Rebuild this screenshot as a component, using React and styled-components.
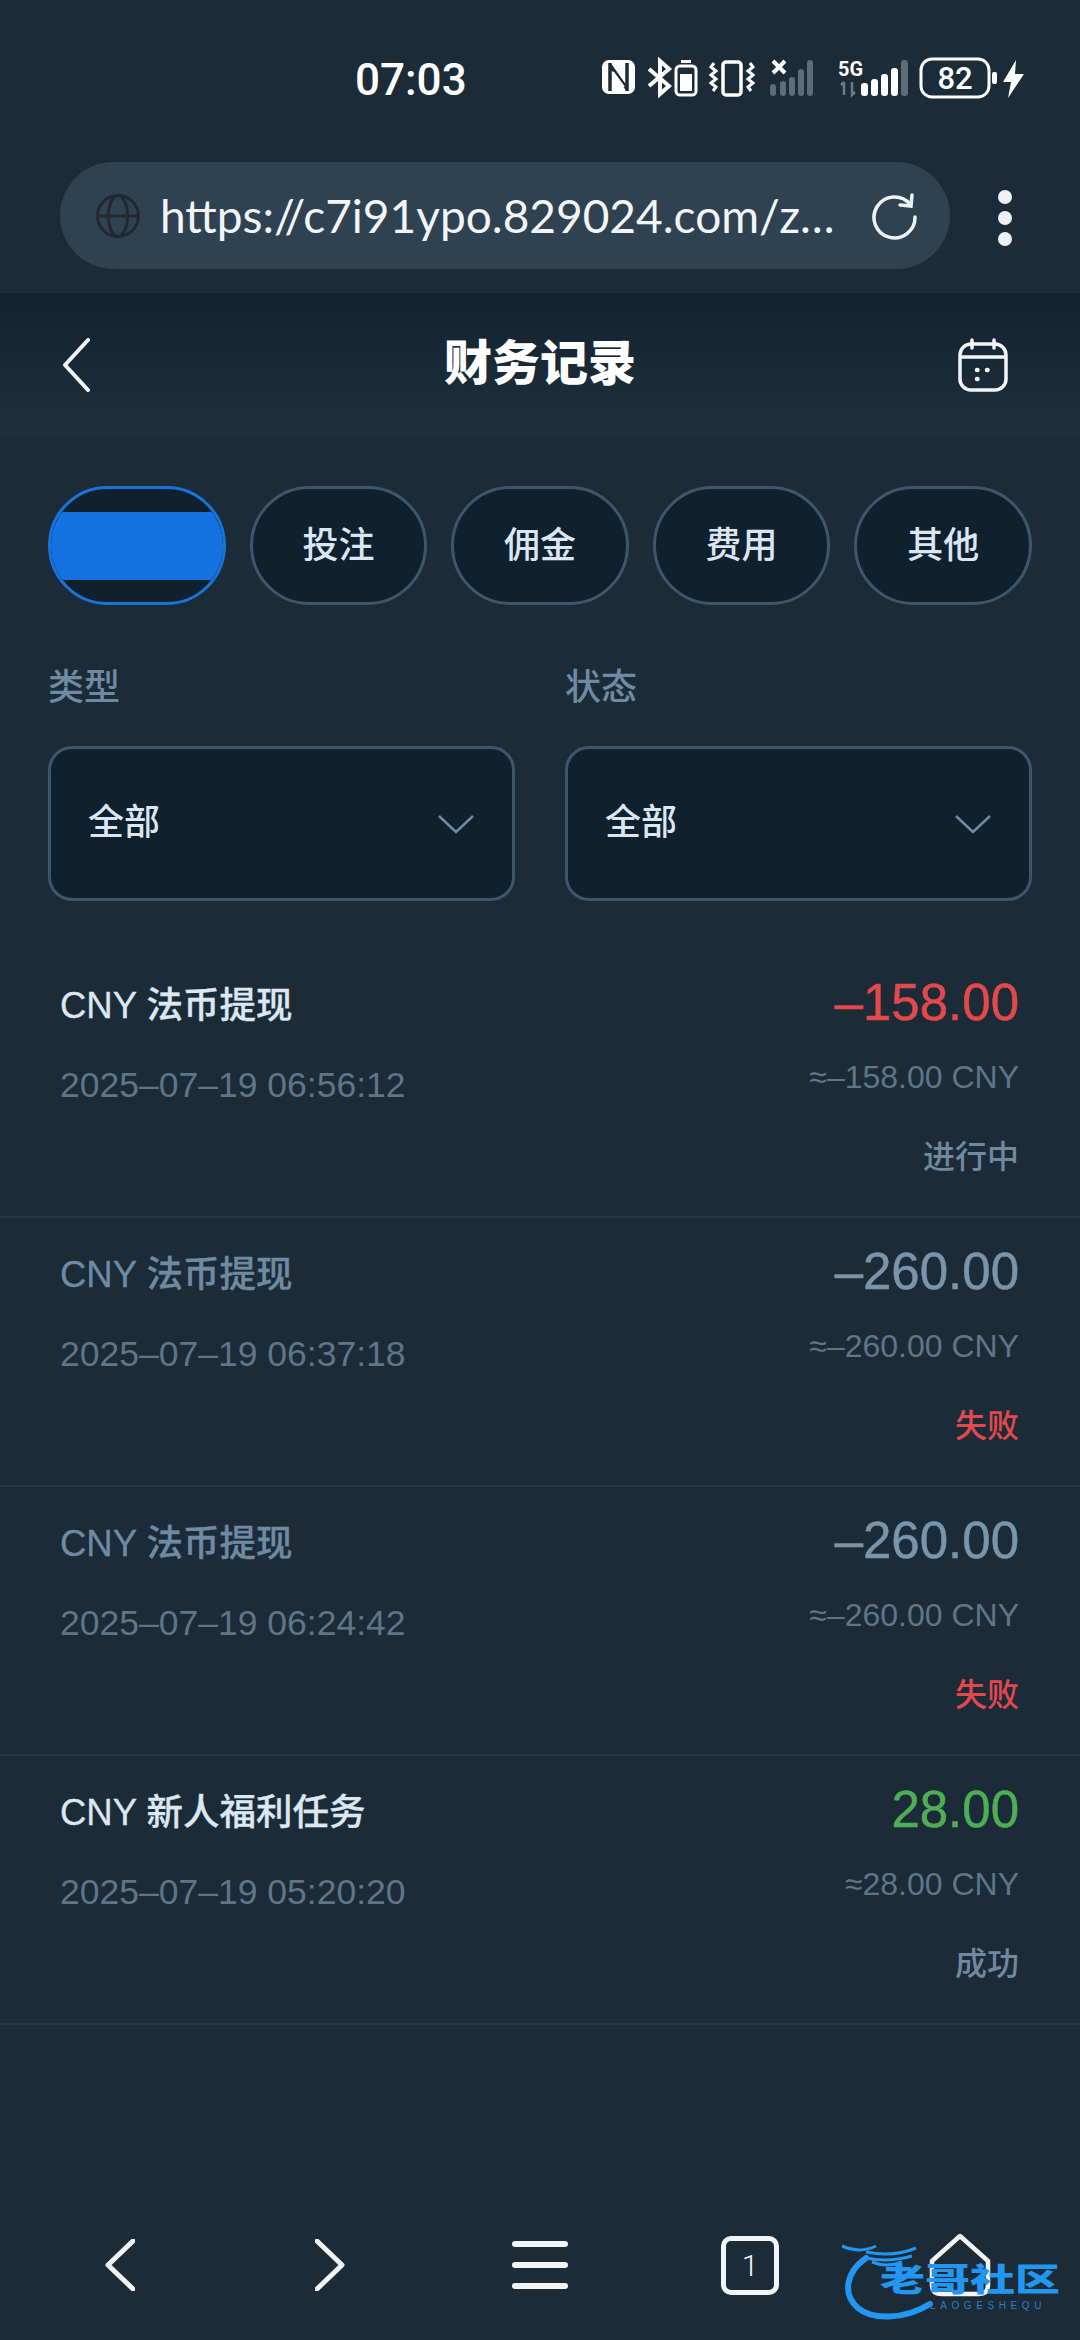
import React from "react";
import styled, { createGlobalStyle } from "styled-components";

const GlobalStyle = createGlobalStyle`
  html, body {
    margin: 0;
    padding: 0;
    background: #1b2b38;
  }
  body {
    font-family: "Liberation Sans", "Noto Sans CJK SC", sans-serif;
  }
`;

const records = [
  { title: "CNY 法币提现", date: "2025–07–19 06:56:12", amount: "–158.00", approx: "≈–158.00 CNY", status: "进行中", tone: "red", active: true },
  { title: "CNY 法币提现", date: "2025–07–19 06:37:18", amount: "–260.00", approx: "≈–260.00 CNY", status: "失败", tone: "dim", failed: true },
  { title: "CNY 法币提现", date: "2025–07–19 06:24:42", amount: "–260.00", approx: "≈–260.00 CNY", status: "失败", tone: "dim", failed: true },
  { title: "CNY 新人福利任务", date: "2025–07–19 05:20:20", amount: "28.00", approx: "≈28.00 CNY", status: "成功", tone: "green", active: true },
];

const amountColors = { red: "#e2494c", dim: "#7a94aa", green: "#4fae55" };

function StatusIcons() {
  return (
    <svg width="430" height="42" viewBox="0 0 430 42" fill="none">
      {/* nfc */}
      <rect x="4" y="3" width="33" height="34" rx="7" fill="#fff" />
      <path d="M12 6v28M29 6v28M12 8l17 24" stroke="#1b2b38" strokeWidth="3.5" />
      <path d="M15 15l11 15" stroke="#fff" strokeWidth="2" />
      {/* bluetooth */}
      <path d="M51 12l20 17-9 8V4l9 8-20 17" stroke="#fff" strokeWidth="4" />
      {/* small battery */}
      <rect x="78" y="9" width="20" height="29" rx="4" stroke="#fff" strokeWidth="3" />
      <rect x="82" y="17" width="12" height="17" fill="#fff" />
      <rect x="83" y="3" width="10" height="3" fill="#fff" />
      {/* vibrate */}
      <rect x="125" y="5" width="18" height="33" rx="3" stroke="#fff" strokeWidth="3.5" />
      <path d="M116 6l-3 4 5 4-5 4 5 4-5 4 5 4-3 4M152 6l3 4-5 4 5 4-5 4 5 4-5 4 3 4" stroke="#fff" strokeWidth="3" />
      {/* no sim signal */}
      <path d="M175 4l12 12M187 4l-12 12" stroke="#fff" strokeWidth="4" />
      <g fill="#5c6c79">
        <rect x="172" y="27" width="6" height="12" rx="3" />
        <rect x="182" y="24" width="6" height="15" rx="3" />
        <rect x="191" y="20" width="6" height="19" rx="3" />
        <rect x="200" y="12" width="6" height="27" rx="3" />
        <rect x="209" y="3" width="6" height="36" rx="3" />
      </g>
      {/* 5g signal */}
      <text x="240" y="19" fill="#fff" fontFamily="Roboto, sans-serif" fontWeight="700" fontSize="21" textLength="25" lengthAdjust="spacingAndGlyphs">5G</text>
      <path d="M246 25v13M243 28l3-3M254 25v13l3-3" stroke="#6c7a86" strokeWidth="2.5" />
      <g fill="#fff">
        <rect x="263" y="26" width="7" height="13" rx="3" />
        <rect x="273" y="22" width="7" height="17" rx="3" />
        <rect x="283" y="17" width="7" height="22" rx="3" />
        <rect x="293" y="11" width="7" height="28" rx="3" />
      </g>
      <rect x="303" y="3" width="7" height="36" rx="3" fill="#5c6c79" />
      {/* battery */}
      <rect x="323" y="2" width="68" height="38" rx="11" stroke="#fff" strokeWidth="3" />
      <text x="357" y="32" textAnchor="middle" fill="#fff" fontFamily="Roboto, sans-serif" fontWeight="500" fontSize="31">82</text>
      <rect x="394" y="15" width="5" height="12" rx="2" fill="#fff" />
      <path d="M418 3l-13 22h8l-3 16 16-24h-9z" fill="#fff" />
    </svg>
  );
}

function Globe() {
  return (
    <svg width="46" height="46" viewBox="0 0 46 46" fill="none" stroke="#23282e" strokeWidth="3">
      <circle cx="23" cy="23" r="20.5" />
      <ellipse cx="23" cy="23" rx="9.5" ry="20.5" />
      <path d="M3 23h40" />
    </svg>
  );
}

function Refresh() {
  return (
    <svg width="48" height="48" viewBox="0 0 48 48" fill="none" stroke="#eef2f5" strokeWidth="3.5" strokeLinecap="round">
      <path d="M39 12A20.5 20.5 0 1 0 44 25" />
      <path d="M41 3l-1 11-11-1" />
    </svg>
  );
}

function Calendar() {
  return (
    <svg width="50" height="54" viewBox="0 0 50 54" fill="none" stroke="#f2f5f7" strokeWidth="3.5" strokeLinecap="round">
      <rect x="2" y="6" width="46" height="46" rx="11" />
      <path d="M14 2v8M36 2v8M3 19h44" />
      <path d="M19 32h.5M19 41h.5M29 32h.5" strokeWidth="4.5" />
    </svg>
  );
}

function Chevron({ dir = "left", w = 28, h = 54, sw = 4 }) {
  const d = dir === "left" ? `M${w - 2} 2L3 ${h / 2}L${w - 2} ${h - 2}` : `M2 2L${w - 3} ${h / 2}L2 ${h - 2}`;
  return (
    <svg width={w} height={h} viewBox={`0 0 ${w} ${h}`} fill="none" stroke="#f2f5f7" strokeWidth={sw} strokeLinecap="round" strokeLinejoin="round">
      <path d={d} />
    </svg>
  );
}

function SelectArrow() {
  return (
    <svg width="36" height="20" viewBox="0 0 36 20" fill="none" stroke="#6f8ba3" strokeWidth="2.5">
      <path d="M1 2l17 16L35 2" />
    </svg>
  );
}

function Home() {
  return (
    <svg width="62" height="64" viewBox="0 0 62 64" fill="none" stroke="#f2f5f7" strokeWidth="4.5" strokeLinejoin="round">
      <path d="M31 3L59 28V52Q59 61 50 61H12Q3 61 3 52V28Z" />
    </svg>
  );
}

function Dragon() {
  return (
    <svg width="110" height="90" viewBox="0 0 110 90" fill="none" stroke="#2196f3">
      <path d="M24 18C4 32 0 54 16 68C30 80 62 80 88 64" strokeWidth="6" strokeLinecap="round" />
      <path d="M0 6C14 12 26 10 34 6M24 12C44 16 60 14 74 8M24 18C42 22 56 20 70 16M30 22C42 27 52 25 60 22" strokeWidth="3" />
    </svg>
  );
}

export default function App() {
  return (
    <>
      <GlobalStyle />
      <Page>
        <StatusBar>
          <Clock>07:03</Clock>
          <StatusIcons />
        </StatusBar>

        <BrowserBar>
          <UrlPill>
            <Globe />
            <UrlText>https://c7i91ypo.829024.com/z…</UrlText>
            <Refresh />
          </UrlPill>
          <MoreDots>
            <i />
            <i />
            <i />
          </MoreDots>
        </BrowserBar>

        <Header>
          <HeaderBack>
            <Chevron />
          </HeaderBack>
          <HeaderTitle>财务记录</HeaderTitle>
          <HeaderAction>
            <Calendar />
          </HeaderAction>
        </Header>

        <Tabs>
          <Tab $active>
            <ActiveBand />
          </Tab>
          <Tab>
            <TabLabel>投注</TabLabel>
          </Tab>
          <Tab>
            <TabLabel>佣金</TabLabel>
          </Tab>
          <Tab>
            <TabLabel>费用</TabLabel>
          </Tab>
          <Tab>
            <TabLabel>其他</TabLabel>
          </Tab>
        </Tabs>

        <Filters>
          <Filter>
            <FilterLabel>类型</FilterLabel>
            <Select>
              <SelectValue>全部</SelectValue>
              <SelectArrow />
            </Select>
          </Filter>
          <Filter>
            <FilterLabel>状态</FilterLabel>
            <Select>
              <SelectValue>全部</SelectValue>
              <SelectArrow />
            </Select>
          </Filter>
        </Filters>

        <List>
          {records.map((r) => (
            <Row key={r.date}>
              <RowLeft>
                <RowTitle $active={r.active}>{r.title}</RowTitle>
                <RowDate>{r.date}</RowDate>
              </RowLeft>
              <RowRight>
                <Amount $tone={r.tone}>{r.amount}</Amount>
                <Approx>{r.approx}</Approx>
                <Status $failed={r.failed}>{r.status}</Status>
              </RowRight>
            </Row>
          ))}
        </List>

        <BottomNav>
          <NavItem>
            <Chevron w={30} h={52} sw={5} />
          </NavItem>
          <NavItem>
            <Chevron dir="right" w={30} h={52} sw={5} />
          </NavItem>
          <NavItem>
            <MenuLines>
              <i />
              <i />
              <i />
            </MenuLines>
          </NavItem>
          <NavItem>
            <TabCount>1</TabCount>
          </NavItem>
          <NavItem>
            <Home />
          </NavItem>
        </BottomNav>

        <Watermark>
          <Dragon />
          <WatermarkName>老哥社区</WatermarkName>
          <WatermarkSub>LAOGESHEQU</WatermarkSub>
        </Watermark>
      </Page>
    </>
  );
}

const Page = styled.div`
  position: relative;
  width: 1080px;
  height: 2340px;
  overflow: hidden;
  display: flex;
  flex-direction: column;
  background: #1b2b38;
`;

const StatusBar = styled.div`
  height: 162px;
  box-sizing: border-box;
  padding: 57px 52px 0 355px;
  display: flex;
  justify-content: space-between;
  align-items: flex-start;
`;

const Clock = styled.div`
  margin-top: 2px;
  font-family: Roboto, sans-serif;
  font-size: 44px;
  font-weight: 500;
  line-height: 42px;
  color: #fff;
`;

const BrowserBar = styled.div`
  height: 131px;
  box-sizing: border-box;
  padding: 0 0 24px 60px;
  display: flex;
  align-items: flex-start;
`;

const UrlPill = styled.div`
  width: 890px;
  height: 107px;
  box-sizing: border-box;
  padding: 0 31px 0 35px;
  border-radius: 54px;
  background: #2f4252;
  display: flex;
  align-items: center;
`;

const UrlText = styled.div`
  flex: 1;
  margin-left: 19px;
  font-family: Lato, sans-serif;
  font-size: 46px;
  color: #f2f5f7;
  white-space: nowrap;
`;

const MoreDots = styled.div`
  margin: 28px 0 0 48px;
  display: flex;
  flex-direction: column;
  gap: 7px;

  i {
    width: 14px;
    height: 14px;
    border-radius: 50%;
    background: #eef2f5;
  }
`;

const Header = styled.div`
  height: 144px;
  box-sizing: border-box;
  padding: 0 72px;
  display: grid;
  grid-template-columns: 1fr auto 1fr;
  align-items: center;
  background: linear-gradient(180deg, #122230 0%, #1f303d 100%);
`;

const HeaderBack = styled.div`
  margin-left: -10px;
  display: flex;
`;

const HeaderTitle = styled.div`
  font-size: 48px;
  font-weight: 900;
  line-height: 60px;
  margin-bottom: 3px;
  color: #fff;
`;

const HeaderAction = styled.div`
  display: flex;
  justify-content: flex-end;
`;

const Tabs = styled.div`
  margin-top: 49px;
  padding: 0 48px;
  display: flex;
  gap: 24px;
`;

const Tab = styled.div`
  flex: 1;
  height: 119px;
  box-sizing: border-box;
  border: 3px solid ${({ $active }) => ($active ? "#1a73d8" : "#3e566b")};
  border-radius: 60px;
  background: #0f202e;
  overflow: hidden;
  display: flex;
  align-items: center;
  justify-content: center;
`;

const TabLabel = styled.div`
  color: #dbe6f2;
  font-size: 36px;
  font-weight: 500;
  line-height: 48px;
`;

const ActiveBand = styled.div`
  width: 100%;
  height: 68px;
  background: #1473e0;
`;

const Filters = styled.div`
  margin-top: 59px;
  padding: 0 48px;
  display: grid;
  grid-template-columns: 467px 467px;
  gap: 50px;
`;

const Filter = styled.div`
  display: flex;
  flex-direction: column;
`;

const FilterLabel = styled.div`
  font-size: 36px;
  font-weight: 500;
  line-height: 48px;
  color: #6f8ba3;
  margin-bottom: 34px;
`;

const Select = styled.div`
  height: 155px;
  box-sizing: border-box;
  padding: 0 38px 0 37px;
  border: 3px solid #3e566b;
  border-radius: 24px;
  background: #0f202e;
  display: flex;
  align-items: center;
  justify-content: space-between;
`;

const SelectValue = styled.div`
  color: #dbe6f2;
  font-size: 36px;
  font-weight: 500;
  line-height: 48px;
  margin-bottom: 1px;
`;

const List = styled.div`
  flex: 1;
  margin-top: 48px;
`;

const Row = styled.div`
  height: 269px;
  box-sizing: border-box;
  padding: 26px 61px 0 60px;
  border-bottom: 2px solid #26394a;
  display: flex;
  justify-content: space-between;
`;

const RowLeft = styled.div`
  padding-top: 6px;
`;

const RowTitle = styled.div`
  font-size: 36.5px;
  font-weight: 500;
  line-height: 50px;
  -webkit-text-stroke: 0.3px currentColor;
  color: ${({ $active }) => ($active ? "#dce7f2" : "#6f8ba3")};
`;

const RowDate = styled.div`
  margin-top: 34px;
  font-size: 35.5px;
  line-height: 40px;
  color: #5f7588;
`;

const RowRight = styled.div`
  display: flex;
  flex-direction: column;
  align-items: flex-end;
`;

const Amount = styled.div`
  font-size: 51px;
  line-height: 56px;
  -webkit-text-stroke: 0.5px currentColor;
  color: ${({ $tone }) => amountColors[$tone]};
`;

const Approx = styled.div`
  margin-top: 26px;
  font-size: 32px;
  line-height: 40px;
  color: #5f7588;
`;

const Status = styled.div`
  margin-top: 40px;
  font-size: 32px;
  font-weight: 500;
  line-height: 40px;
  color: ${({ $failed }) => ($failed ? "#e2494c" : "#71899e")};
`;

const BottomNav = styled.div`
  height: 150px;
  padding: 0 15px;
  display: grid;
  grid-template-columns: repeat(5, 1fr);
`;

const NavItem = styled.div`
  display: flex;
  align-items: center;
  justify-content: center;
`;

const MenuLines = styled.div`
  width: 56px;
  display: flex;
  flex-direction: column;
  gap: 15px;

  i {
    height: 6px;
    border-radius: 3px;
    background: #f2f5f7;
  }
`;

const TabCount = styled.div`
  width: 58px;
  height: 59px;
  box-sizing: border-box;
  border: 5px solid #f2f5f7;
  border-radius: 10px;
  color: #f2f5f7;
  font-family: Roboto, sans-serif;
  font-size: 30px;
  font-weight: 300;
  display: flex;
  align-items: center;
  justify-content: center;
`;

const Watermark = styled.div`
  position: absolute;
  left: 842px;
  top: 2240px;
  width: 230px;
  height: 90px;
`;

const WatermarkName = styled.div`
  position: absolute;
  left: 38px;
  top: 23px;
  font-size: 45px;
  line-height: 34px;
  font-weight: 900;
  white-space: nowrap;
  color: #2196f3;
  transform: scaleY(0.72);
`;

const WatermarkSub = styled.div`
  position: absolute;
  left: 88px;
  top: 60px;
  font-size: 10px;
  line-height: 12px;
  letter-spacing: 4.6px;
  color: #2f7fc4;
`;
